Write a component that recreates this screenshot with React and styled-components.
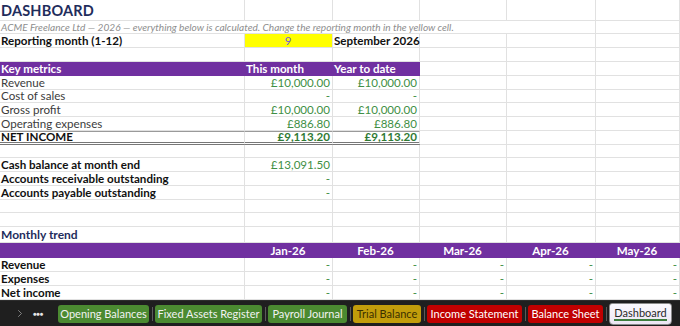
import React from "react";
import styled, { createGlobalStyle, css } from "styled-components";
import { ChevronRight } from "lucide-react";

const GRID = "#e1e1e1";
const PURPLE = "#7030a0";
const GREEN = "#3f8f45";
const NAVY = "#1f2d5c";
const COLS = "245px 88px 87px 87px 89px 1fr";

const GlobalStyle = createGlobalStyle`
  body {
    margin: 0;
    background: #fff;
    font-family: Lato, "Liberation Sans", sans-serif;
    overflow: hidden;
  }
`;

const Page = styled.div`
  width: 680px;
  height: 326px;
  display: flex;
  flex-direction: column;
  overflow: hidden;
`;

const Sheet = styled.div`
  height: 300px;
  overflow: hidden;
`;

const Row = styled.div`
  display: grid;
  grid-template-columns: ${COLS};
  height: ${(p) => p.$h}px;
`;

const Cell = styled.div`
  box-sizing: border-box;
  grid-column: ${(p) => p.$span || "auto"};
  border-right: 1px solid ${GRID};
  border-bottom: 1px solid ${GRID};
  display: flex;
  align-items: flex-end;
  justify-content: ${(p) =>
    p.$align === "right" ? "flex-end" : p.$align === "center" ? "center" : "flex-start"};
  padding: 0 2px 0 1px;
  font-size: 11.6px;
  line-height: 12px;
  white-space: nowrap;
  overflow: visible;
  color: ${(p) => (p.$num ? GREEN : p.$bold ? "#111" : "#3c3c3c")};
  font-weight: ${(p) => (p.$bold ? 700 : 400)};
  ${(p) =>
    p.$fill === "purple" &&
    css`
      background: ${PURPLE};
      color: #fff;
      font-weight: 700;
      border-color: ${PURPLE};
    `}
  ${(p) =>
    p.$fill === "yellow" &&
    css`
      background: #ffff00;
      color: #6f5fd0;
    `}
  ${(p) =>
    p.$total &&
    css`
      border-top: 1px solid #9a9a9a;
      border-bottom: 3px double #777;
      color: ${p.$num ? "#2f7a34" : "#111"};
      font-weight: 700;
      line-height: 10px;
    `}
`;

const Title = styled(Cell)`
  && {
    font-size: 14.5px;
    line-height: 19px;
    font-weight: 700;
    color: ${NAVY};
    letter-spacing: 0.2px;
  }
`;

const Note = styled(Cell)`
  && {
    font-style: italic;
    color: #8e8e8e;
    font-size: 10.1px;
    line-height: 11px;
  }
`;

const Section = styled(Cell)`
  && {
    font-size: 12px;
    line-height: 13px;
    color: ${NAVY};
    font-weight: 700;
    padding-bottom: 1px;
  }
`;

const TabBar = styled.div`
  height: 26px;
  background: #1f1f1f;
  border-top: 1px solid #2c2c2c;
  box-sizing: border-box;
  display: flex;
  align-items: center;
`;

const Nav = styled.div`
  display: flex;
  justify-content: center;
  align-items: center;
  color: ${(p) => (p.$dim ? "#9a9a9a" : "#e6e6e6")};
  width: ${(p) => p.$w}px;
  font-size: 6px;
  letter-spacing: -0.3px;
`;

const tabColors = {
  green: { bg: "#4b8a31", fg: "#f2f2f2" },
  gold: { bg: "#c29d0b", fg: "#3b3000" },
  red: { bg: "#c00000", fg: "#ffffff" },
};

const Tab = styled.div`
  box-sizing: border-box;
  width: ${(p) => p.$w}px;
  height: 18px;
  border-radius: 3px;
  display: flex;
  align-items: center;
  justify-content: center;
  background: ${(p) => tabColors[p.$tone].bg};
  color: ${(p) => tabColors[p.$tone].fg};
  font-size: 11px;
  white-space: nowrap;
`;

const Sep = styled.div`
  width: 1px;
  height: 14px;
  margin: 0 2.5px;
  background: #5a5a5a;
`;

const ActiveTab = styled.div`
  box-sizing: border-box;
  width: 63px;
  height: 22px;
  margin-top: 1px;
  border-radius: 3px 3px 4px 4px;
  background: linear-gradient(#fbf9fe, #ece6f4);
  border: 1px solid #8a8a8a;
  display: flex;
  align-items: center;
  justify-content: center;
  font-size: 11px;
  color: #2a2a2a;
  span {
    border-bottom: 2px solid #3d7d3d;
    line-height: 12px;
  }
`;

const Blank = ({ h, n = 6 }) => (
  <Row $h={h}>
    {Array.from({ length: n }).map((_, i) => (
      <Cell key={i} />
    ))}
  </Row>
);

const metrics = [
  ["Revenue", "£10,000.00", "£10,000.00"],
  ["Cost of sales", "-", "-"],
  ["Gross profit", "£10,000.00", "£10,000.00"],
  ["Operating expenses", "£886.80", "£886.80"],
];
const metricHeights = [14, 13, 14, 14];

const balances = [
  ["Cash balance at month end", "£13,091.50"],
  ["Accounts receivable outstanding", "-"],
  ["Accounts payable outstanding", "-"],
];

const months = ["Jan-26", "Feb-26", "Mar-26", "Apr-26", "May-26"];
const trend = ["Revenue", "Expenses", "Net income"];

export default function App() {
  return (
    <Page>
      <GlobalStyle />
      <Sheet>
        <Row $h={21}>
          <Title>DASHBOARD</Title>
          <Cell />
          <Cell />
          <Cell />
          <Cell />
          <Cell />
        </Row>
        <Row $h={13}>
          <Note $span="1 / 6">
            ACME Freelance Ltd — 2026 — everything below is calculated. Change the reporting month in the yellow cell.
          </Note>
          <Cell />
        </Row>
        <Row $h={14}>
          <Cell $bold>Reporting month (1-12)</Cell>
          <Cell $fill="yellow" $align="center">9</Cell>
          <Cell $bold>September 2026</Cell>
          <Cell />
          <Cell />
          <Cell />
        </Row>
        <Blank h={14} />
        <Row $h={14}>
          <Cell $fill="purple">Key metrics</Cell>
          <Cell $fill="purple">This month</Cell>
          <Cell $fill="purple">Year to date</Cell>
          <Cell />
          <Cell />
          <Cell />
        </Row>
        {metrics.map(([label, month, ytd], i) => (
          <Row key={label} $h={metricHeights[i]}>
            <Cell>{label}</Cell>
            <Cell $num $align="right">{month}</Cell>
            <Cell $num $align="right">{ytd}</Cell>
            <Cell />
            <Cell />
            <Cell />
          </Row>
        ))}
        <Row $h={14}>
          <Cell $total>NET INCOME</Cell>
          <Cell $total $num $align="right">£9,113.20</Cell>
          <Cell $total $num $align="right">£9,113.20</Cell>
          <Cell />
          <Cell />
          <Cell />
        </Row>
        <Blank h={13} />
        {balances.map(([label, value]) => (
          <Row key={label} $h={14}>
            <Cell $bold>{label}</Cell>
            <Cell $num $align="right">{value}</Cell>
            <Cell />
            <Cell />
            <Cell />
            <Cell />
          </Row>
        ))}
        <Blank h={13} />
        <Blank h={14} />
        <Row $h={16}>
          <Section>Monthly trend</Section>
          <Cell />
          <Cell />
          <Cell />
          <Cell />
          <Cell />
        </Row>
        <Row $h={15}>
          <Cell $fill="purple" />
          {months.map((m) => (
            <Cell key={m} $fill="purple" $align="center">{m}</Cell>
          ))}
        </Row>
        {trend.map((label) => (
          <Row key={label} $h={14}>
            <Cell $bold>{label}</Cell>
            {months.map((m) => (
              <Cell key={m} $num $align="right">-</Cell>
            ))}
          </Row>
        ))}
      </Sheet>
      <TabBar>
        <Nav $w={14} />
        <Nav $w={12} $dim>
          <ChevronRight size={13} strokeWidth={1.6} />
        </Nav>
        <Nav $w={24}>●●●</Nav>
        <Nav $w={8} />
        <Tab $tone="green" $w={91}>Opening Balances</Tab>
        <Sep />
        <Tab $tone="green" $w={107}>Fixed Assets Register</Tab>
        <Sep />
        <Tab $tone="green" $w={79}>Payroll Journal</Tab>
        <Sep />
        <Tab $tone="gold" $w={68}>Trial Balance</Tab>
        <Sep />
        <Tab $tone="red" $w={95}>Income Statement</Tab>
        <Sep />
        <Tab $tone="red" $w={75}>Balance Sheet</Tab>
        <Sep />
        <ActiveTab>
          <span>Dashboard</span>
        </ActiveTab>
      </TabBar>
    </Page>
  );
}
